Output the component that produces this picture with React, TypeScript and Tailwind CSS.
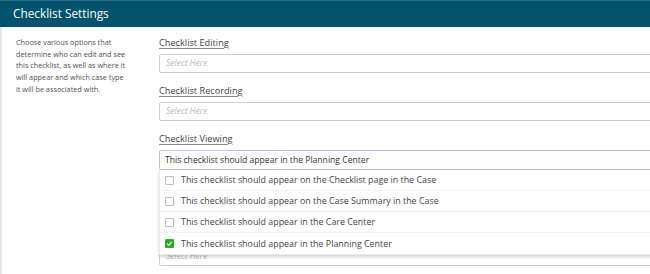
import React from "react";

const font = { fontFamily: '"Open Sans", "Liberation Sans", sans-serif' };

function Label({ children }: { children: React.ReactNode }) {
  return (
    <div className="h-[13px] flex items-center text-[9.2px] text-[#3f3f3f] underline underline-offset-2 decoration-[#888]">
      {children}
    </div>
  );
}

function Select({ className = "" }: { className?: string }) {
  return (
    <div
      className={`w-[560px] h-[19px] border border-[#cfcfcf] rounded-[2px] bg-white flex items-center pl-[6px] text-[8.5px] italic text-[#b8b8b8] ${className}`}
    >
      Select Here
    </div>
  );
}

const options = [
  { text: "This checklist should appear on the Checklist page in the Case", checked: false },
  { text: "This checklist should appear on the Case Summary in the Case", checked: false },
  { text: "This checklist should appear in the Care Center", checked: false },
  { text: "This checklist should appear in the Planning Center", checked: true },
];

const para = [
  "Choose various options that",
  "determine who can edit and see",
  "this checklist, as well as where it",
  "will appear and which case type",
  "it will be associated with.",
];

export default function App() {
  return (
    <div className="w-[650px] h-[274px] overflow-hidden bg-white" style={font}>
      <div className="h-[27px] bg-[#03536f] border-t border-[#2a6a84] flex items-center pl-[13px] text-white text-[11.8px]">
        Checklist Settings
      </div>
      <div className="flex h-[247px] border-l-2 border-[#e6e6e6]">
        <div className="w-[157px] shrink-0 pl-[14px] pt-[10px] text-[7.3px] leading-[11.7px] text-[#505050]">
          {para.map((l, i) => (
            <div key={i} className="whitespace-nowrap">
              {l}
            </div>
          ))}
        </div>
        <div className="flex-1 min-w-0 pt-[9px]">
          <Label>Checklist Editing</Label>
          <Select className="mt-[5px]" />
          <div className="mt-[11px]">
            <Label>Checklist Recording</Label>
          </div>
          <Select className="mt-[5px]" />
          <div className="mt-[11px]">
            <Label>Checklist Viewing</Label>
          </div>
          <div className="relative mt-[5px]">
            <div className="w-[560px] h-[20px] border border-[#b4c6e4] rounded-[2px] bg-white flex items-center pl-[5px] text-[8.6px] text-[#333]">
              This checklist should appear in the Planning Center
            </div>
            <div className="absolute left-0 top-[20px] w-[560px] bg-white shadow-[0_2px_3px_rgba(0,0,0,0.18)] border border-[#ececec] border-t-0 z-10">
              {options.map((o, i) => (
                <div
                  key={i}
                  className={`h-[21px] flex items-center pl-[5px] ${i < options.length - 1 ? "border-b border-[#f0f0f0]" : ""}`}
                >
                  {o.checked ? (
                    <span className="w-[9px] h-[9px] shrink-0 rounded-[1px] bg-[#23b026] flex items-center justify-center">
                      <svg width="7" height="7" viewBox="0 0 8 8">
                        <path d="M1.5 4.2 L3.2 5.8 L6.5 2.3" stroke="white" strokeWidth="1.3" fill="none" />
                      </svg>
                    </span>
                  ) : (
                    <span className="w-[9px] h-[9px] shrink-0 rounded-[1px] border border-[#bdbdbd] bg-white" />
                  )}
                  <span className="ml-[7px] text-[8.9px] font-medium text-[#444] whitespace-nowrap">{o.text}</span>
                </div>
              ))}
            </div>
            <Select className="mt-[77px]" />
          </div>
        </div>
      </div>
    </div>
  );
}
